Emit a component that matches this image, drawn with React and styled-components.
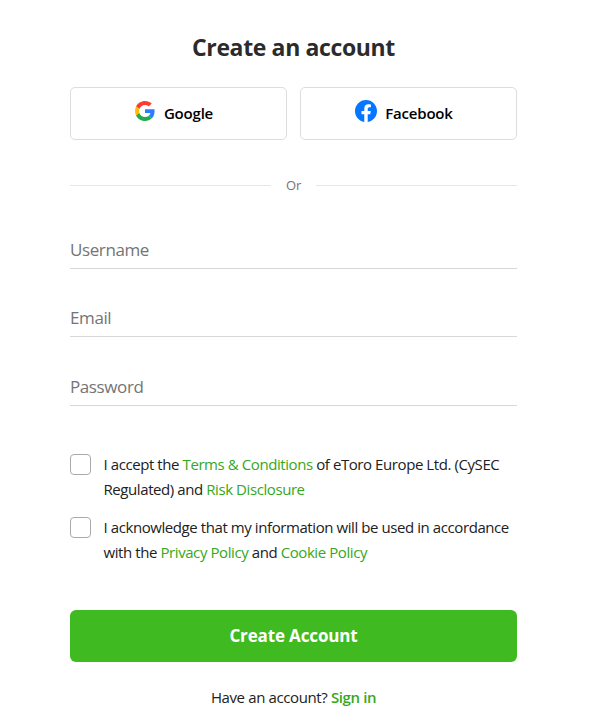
import { useState } from "react";
import styled, { createGlobalStyle } from "styled-components";

const GlobalStyle = createGlobalStyle`
  * {
    box-sizing: border-box;
  }
  body {
    margin: 0;
    background-color: #ffffff;
    font-family: "Open Sans", sans-serif;
    color: #212121;
  }
`;

const Wrapper = styled.main`
  display: flex;
  flex-direction: column;
  width: 517px;
  height: 720px;
  padding: 31px 0 0 70px;
`;

const Title = styled.h1`
  margin: 0;
  font-size: 23px;
  line-height: 32px;
  font-weight: 700;
  letter-spacing: -0.36px;
  text-align: center;
  color: #2b2b2b;
`;

const SocialRow = styled.div`
  display: grid;
  grid-template-columns: 1fr 1fr;
  gap: 13px;
  margin-top: 24px;
`;

const SocialButton = styled.button`
  display: flex;
  align-items: center;
  justify-content: center;
  gap: ${(props) => props.$gap};
  height: 53px;
  padding: 0 9px 1px 0;
  border: 1px solid #dddddd;
  border-radius: 5px;
  background-color: white;
  font-family: inherit;
  font-size: 15px;
  font-weight: 600;
  letter-spacing: -0.2px;
  color: #000000;
  cursor: pointer;
  svg {
    margin-bottom: 4px;
  }
`;

const Divider = styled.div`
  display: flex;
  align-items: center;
  gap: 15px;
  height: 20px;
  margin-top: 35px;
  font-size: 13px;
  letter-spacing: -0.1px;
  color: #747474;
  &::before,
  &::after {
    content: "";
    flex: 1;
    height: 1px;
    background-color: #e6e6e6;
  }
`;

const Form = styled.form`
  display: flex;
  flex-direction: column;
  margin-top: 37px;
`;

const Field = styled.input`
  width: 100%;
  height: 36.5px;
  margin-bottom: 32px;
  padding: 0 0 1px;
  border: none;
  border-bottom: 1px solid #d8d8d8;
  border-radius: 0;
  background-color: transparent;
  font-family: inherit;
  font-size: 17px;
  letter-spacing: -0.4px;
  color: #212121;
  &::placeholder {
    color: #747474;
    opacity: 1;
  }
  &:focus {
    outline: none;
    border-color: #40ba21;
  }
`;

const Agreement = styled.label`
  display: flex;
  align-items: flex-start;
  gap: 12.5px;
  margin-top: ${(props) => props.$top};
  font-size: 15px;
  line-height: 25px;
  letter-spacing: -0.42px;
  white-space: nowrap;
`;

const Checkbox = styled.input`
  appearance: none;
  flex: none;
  width: 21px;
  height: 21px;
  margin: 2px 0 0;
  border: 1px solid #aaaaaa;
  border-radius: 4px;
  background-color: white;
  &:checked {
    border-color: #40ba21;
    background-color: #40ba21;
  }
`;

const Link = styled.a`
  color: #35a81c;
  font-weight: ${(props) => (props.$strong ? 600 : 400)};
  text-decoration: none;
`;

const SubmitButton = styled.button`
  height: 52px;
  margin-top: 45px;
  border: none;
  border-radius: 6px;
  background-color: #40ba21;
  font-family: inherit;
  font-size: 17px;
  font-weight: 700;
  letter-spacing: -0.14px;
  color: white;
  cursor: pointer;
`;

const SignIn = styled.p`
  margin: 23px 0 0;
  font-size: 15px;
  line-height: 25px;
  letter-spacing: -0.38px;
  text-align: center;
`;

function GoogleIcon() {
  return (
    <svg width="20" height="20" viewBox="0 0 48 48">
      <path fill="#ff3d2e" d="M24 9.5c3.54 0 6.71 1.22 9.21 3.6l6.85-6.85C35.9 2.38 30.47 0 24 0 14.62 0 6.51 5.38 2.56 13.22l7.98 6.19C12.43 13.72 17.74 9.5 24 9.5z" />
      <path fill="#2b7fff" d="M46.98 24.55c0-1.57-.15-3.09-.38-4.55H24v9.02h12.94c-.58 2.96-2.26 5.48-4.78 7.18l7.73 6c4.51-4.18 7.09-10.36 7.09-17.65z" />
      <path fill="#ffbc00" d="M10.53 28.59c-.48-1.45-.76-2.99-.76-4.59s.27-3.14.76-4.59l-7.98-6.19C.92 16.46 0 20.12 0 24s.92 7.54 2.56 10.78l7.97-6.19z" />
      <path fill="#20ac4b" d="M24 48c6.48 0 11.93-2.13 15.89-5.81l-7.73-6c-2.15 1.45-4.92 2.3-8.16 2.3-6.26 0-11.57-4.22-13.47-9.91l-7.98 6.19C6.51 42.62 14.62 48 24 48z" />
    </svg>
  );
}

function FacebookIcon() {
  return (
    <svg width="22" height="22" viewBox="0 0 24 24">
      <path fill="#0675ff" d="M24 12.073C24 5.405 18.627 0 12 0S0 5.405 0 12.073C0 18.1 4.388 23.094 10.125 24v-8.437H7.078v-3.49h3.047v-2.66c0-3.025 1.792-4.697 4.533-4.697 1.312 0 2.686.236 2.686.236v2.971H15.83c-1.491 0-1.956.93-1.956 1.886v2.264h3.328l-.532 3.49h-2.796V24C19.612 23.094 24 18.1 24 12.073z" />
    </svg>
  );
}

function App() {
  const [values, setValues] = useState({ username: "", email: "", password: "" });

  const onChange = (e) => {
    const { name, value } = e.target;
    setValues((prev) => ({ ...prev, [name]: value }));
  };

  const onSubmit = (e) => {
    e.preventDefault();
  };

  return (
    <>
      <GlobalStyle />
      <Wrapper>
        <Title>Create an account</Title>
        <SocialRow>
          <SocialButton type="button" $gap="9px">
            <GoogleIcon />
            Google
          </SocialButton>
          <SocialButton type="button" $gap="8px">
            <FacebookIcon />
            Facebook
          </SocialButton>
        </SocialRow>
        <Divider>Or</Divider>
        <Form onSubmit={onSubmit}>
          <Field name="username" placeholder="Username" value={values.username} onChange={onChange} />
          <Field name="email" type="email" placeholder="Email" value={values.email} onChange={onChange} />
          <Field name="password" type="password" placeholder="Password" value={values.password} onChange={onChange} />
          <Agreement $top="14px">
            <Checkbox type="checkbox" />
            <span>
              I accept the <Link href="#">Terms & Conditions</Link> of eToro Europe Ltd. (CySEC
              <br />
              Regulated) and <Link href="#">Risk Disclosure</Link>
            </span>
          </Agreement>
          <Agreement $top="13px">
            <Checkbox type="checkbox" />
            <span>
              I acknowledge that my information will be used in accordance
              <br />
              with the <Link href="#">Privacy Policy</Link> and <Link href="#">Cookie Policy</Link>
            </span>
          </Agreement>
          <SubmitButton type="submit">Create Account</SubmitButton>
        </Form>
        <SignIn>
          Have an account? <Link href="#" $strong>Sign in</Link>
        </SignIn>
      </Wrapper>
    </>
  );
}

export default App;
